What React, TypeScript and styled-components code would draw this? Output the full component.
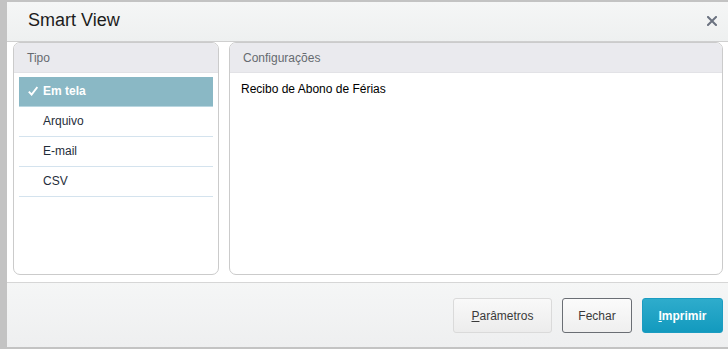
import { FC } from 'react'
import styled, { createGlobalStyle } from 'styled-components'

const GlobalStyle = createGlobalStyle`
  html, body {
    margin: 0;
    padding: 0;
    background: #c3c3c3;
    font-family: 'Liberation Sans', Arial, sans-serif;
    overflow: hidden;
  }
`

type Option = {
  label: string
  selected?: boolean
}

const options: Option[] = [
  { label: 'Em tela', selected: true },
  { label: 'Arquivo' },
  { label: 'E-mail' },
  { label: 'CSV' },
]

interface RowProps {
  selected?: boolean
}

interface ButtonProps {
  variant: 'default' | 'outline' | 'primary'
}

const buttonWidth = { default: 99, outline: 70, primary: 81 }

const App: FC = () => (
  <>
    <GlobalStyle />
    <Dialog>
      <Header>
        <Title>Smart View</Title>
        <Close aria-label="Fechar">
          <svg width="10" height="10" viewBox="0 0 10 10">
            <path d="M1 1 L9 9 M9 1 L1 9" stroke="#6b7280" strokeWidth="2" strokeLinecap="square" />
          </svg>
        </Close>
      </Header>

      <Body>
        <TypePanel>
          <PanelHeader>Tipo</PanelHeader>
          <List>
            {options.map((o) => (
              <Row key={o.label} selected={o.selected}>
                <Check>
                  {o.selected && (
                    <svg width="10" height="10" viewBox="0 0 10 10">
                      <path d="M0.8 5.6 L3.6 8.6 L9.4 1" fill="none" stroke="#fff" strokeWidth="1.9" />
                    </svg>
                  )}
                </Check>
                {o.label}
              </Row>
            ))}
          </List>
        </TypePanel>

        <ConfigPanel>
          <PanelHeader>Configurações</PanelHeader>
          <ConfigText>Recibo de Abono de Férias</ConfigText>
        </ConfigPanel>
      </Body>

      <Footer>
        <Button variant="default">
          <u>P</u>arâmetros
        </Button>
        <Button variant="outline">Fechar</Button>
        <Button variant="primary">
          <u>I</u>mprimir
        </Button>
      </Footer>
    </Dialog>
  </>
)

export default App

const Dialog = styled.div`
  margin: 2px 0 0 7px;
  width: 721px;
  height: 345px;
  background: #fff;
  display: flex;
  flex-direction: column;
`

const Header = styled.div`
  height: 39px;
  display: flex;
  align-items: center;
  justify-content: space-between;
  padding: 0 11px 0 21px;
  background: linear-gradient(#f5f6f6, #eef0f0);
  border-bottom: 1px solid #cfcfcf;
`

const Title = styled.div`
  font-size: 18px;
  color: #1c1c1c;
  padding-bottom: 2px;
`

const Close = styled.div`
  display: flex;
  align-items: center;
  padding-bottom: 2px;
`

const Body = styled.div`
  flex: 1;
  display: flex;
  gap: 10px;
  padding: 0 0 7px 6px;
`

const Panel = styled.div`
  display: flex;
  flex-direction: column;
  border: 1px solid #cbcbcb;
  border-radius: 7px;
  overflow: hidden;
`

const TypePanel = styled(Panel)`
  width: 204px;
`

const ConfigPanel = styled(Panel)`
  width: 492px;
`

const PanelHeader = styled.div`
  height: 29px;
  display: flex;
  align-items: center;
  padding-left: 13px;
  background: #eaeaee;
  border-bottom: 1px solid #e2e2e6;
  color: #666a70;
  font-size: 12px;
`

const List = styled.div`
  display: flex;
  flex-direction: column;
  padding: 4px 5px 0;
`

const Row = styled.div<RowProps>`
  display: flex;
  align-items: center;
  padding-bottom: 2px;
  box-sizing: border-box;
  height: 30px;
  font-size: 12px;
  color: ${(p) => (p.selected ? '#fff' : '#1f2d3a')};
  font-weight: ${(p) => (p.selected ? 700 : 400)};
  background: ${(p) => (p.selected ? '#8ab8c5' : 'transparent')};
  border-bottom: 1px solid ${(p) => (p.selected ? '#b9d6e0' : '#d4e3ee')};
`

const Check = styled.span`
  width: 24px;
  padding-left: 9px;
  box-sizing: border-box;
  display: flex;
  align-items: center;
`

const ConfigText = styled.div`
  padding: 9px 11px;
  font-size: 12px;
  color: #000;
`

const Footer = styled.div`
  height: 65px;
  display: flex;
  justify-content: flex-end;
  align-items: flex-start;
  gap: 10px;
  padding: 15px 5px 0 0;
  box-sizing: border-box;
  border-top: 1px solid #d6d6d6;
  background: linear-gradient(#f5f6f6, #eeeff0);
`

const Button = styled.button<ButtonProps>`
  height: 35px;
  padding: 0;
  width: ${(p) => buttonWidth[p.variant]}px;
  border-radius: 3px;
  font-family: 'Liberation Sans', Arial, sans-serif;
  font-size: 12px;
  border: 1px solid
    ${(p) => (p.variant === 'primary' ? '#1b9cc1' : p.variant === 'outline' ? '#6a6e74' : '#dadada')};
  color: ${(p) => (p.variant === 'primary' ? '#fff' : '#3a3a3a')};
  font-weight: ${(p) => (p.variant === 'primary' ? 700 : 400)};
  background: ${(p) =>
    p.variant === 'primary'
      ? 'linear-gradient(#2eaccc, #139abe)'
      : p.variant === 'outline'
        ? 'linear-gradient(#fbfbfb, #efefef)'
        : 'linear-gradient(#f9f9f9, #ececec)'};

  u {
    text-decoration: underline;
  }
`
